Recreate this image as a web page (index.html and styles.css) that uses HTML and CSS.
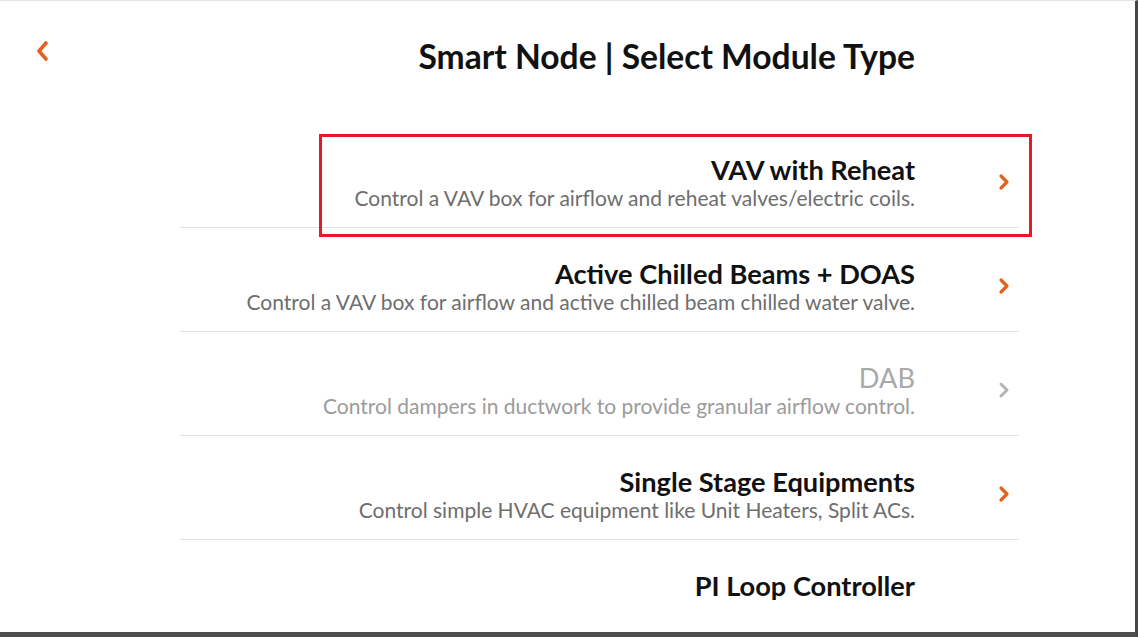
FILE: index.html
```html
<!DOCTYPE html>
<html lang="en">
<head>
    <meta charset="UTF-8">
    <meta name="viewport" content="width=device-width, initial-scale=1.0">
    <title>Smart Node | Select Module Type</title>
    <link rel="stylesheet" href="styles.css">
</head>
<body>
    <div class="screen">
        <header class="topbar">
            <button class="back-btn" aria-label="Back">
                <svg width="14" height="22" viewBox="0 0 14 22"><polyline points="11,3 4,11 11,19" fill="none" stroke="#e0621e" stroke-width="3.6" stroke-linecap="round" stroke-linejoin="round"/></svg>
            </button>
            <h1 class="page-title">Smart Node | Select Module Type</h1>
        </header>

        <ul class="module-list">
            <li class="module">
                <div class="module-text">
                    <div class="module-name">VAV with Reheat</div>
                    <div class="module-desc">Control a VAV box for airflow and reheat valves/electric coils.</div>
                </div>
                <span class="chevron">
                    <svg width="12" height="18" viewBox="0 0 12 18"><polyline points="3,3 9,9 3,15" fill="none" stroke="#e0621e" stroke-width="3.2" stroke-linecap="round" stroke-linejoin="round"/></svg>
                </span>
            </li>
            <li class="module">
                <div class="module-text">
                    <div class="module-name">Active Chilled Beams + DOAS</div>
                    <div class="module-desc">Control a VAV box for airflow and active chilled beam chilled water valve.</div>
                </div>
                <span class="chevron">
                    <svg width="12" height="18" viewBox="0 0 12 18"><polyline points="3,3 9,9 3,15" fill="none" stroke="#e0621e" stroke-width="3.2" stroke-linecap="round" stroke-linejoin="round"/></svg>
                </span>
            </li>
            <li class="module disabled">
                <div class="module-text">
                    <div class="module-name">DAB</div>
                    <div class="module-desc">Control dampers in ductwork to provide granular airflow control.</div>
                </div>
                <span class="chevron">
                    <svg width="12" height="18" viewBox="0 0 12 18"><polyline points="3,3 9,9 3,15" fill="none" stroke="#b4b4b4" stroke-width="3" stroke-linecap="round" stroke-linejoin="round"/></svg>
                </span>
            </li>
            <li class="module">
                <div class="module-text">
                    <div class="module-name">Single Stage Equipments</div>
                    <div class="module-desc">Control simple HVAC equipment like Unit Heaters, Split ACs.</div>
                </div>
                <span class="chevron">
                    <svg width="12" height="18" viewBox="0 0 12 18"><polyline points="3,3 9,9 3,15" fill="none" stroke="#e0621e" stroke-width="3.2" stroke-linecap="round" stroke-linejoin="round"/></svg>
                </span>
            </li>
            <li class="module">
                <div class="module-text">
                    <div class="module-name">PI Loop Controller</div>
                </div>
                <span class="chevron"></span>
            </li>
        </ul>

        <!-- annotation box around the first option -->
        <div class="highlight"></div>
    </div>
</body>
</html>
```

FILE: styles.css
```css
* {
    box-sizing: border-box;
}

html, body {
    margin: 0;
    padding: 0;
    background-color: #ffffff;
}

body {
    font-family: Lato, "Open Sans", sans-serif;
    color: #111111;
    width: 1138px;
    height: 642px;
    overflow: hidden;
}

.screen {
    position: relative;
    width: 1138px;
    height: 637px;
    border-top: 1px solid #e2e2e2;
    border-right: 3px solid #454545;
    border-bottom: 5px solid #4e4e4e;
    overflow: hidden;
    background-color: #ffffff;
}

.topbar {
    display: flex;
    align-items: center;
    height: 123px;
    padding: 0 220px 10px 35px;
}

.back-btn {
    background: none;
    border: none;
    padding: 0;
    cursor: pointer;
    display: flex;
    margin-bottom: 14px;
}

.page-title {
    margin: 0 0 4px auto;
    font-size: 33.6px;
    font-weight: 700;
    color: #111111;
}

.module-list {
    list-style: none;
    margin: 0 0 0 180px;
    padding: 0;
    width: 839px;
}

.module {
    display: flex;
    align-items: flex-start;
    height: 104px;
    padding-top: 31px;
    border-bottom: 1px solid #e4e4e4;
}

.module-text {
    flex: 1;
    text-align: right;
}

.module-name {
    font-size: 27.2px;
    font-weight: 700;
    line-height: 30px;
    color: #111111;
}

.module-desc {
    font-size: 21px;
    line-height: 26px;
    color: #6e6e6e;
}

.module.disabled .module-name {
    color: #a9a9a9;
    font-weight: 400;
}

.module.disabled .module-desc {
    color: #9b9b9b;
}

.chevron {
    width: 104px;
    display: flex;
    justify-content: flex-end;
    padding: 18px 9px 0 0;
}

.highlight {
    position: absolute;
    left: 319px;
    top: 133px;
    width: 713px;
    height: 103px;
    border: 3px solid #e81923;
    pointer-events: none;
}
```
